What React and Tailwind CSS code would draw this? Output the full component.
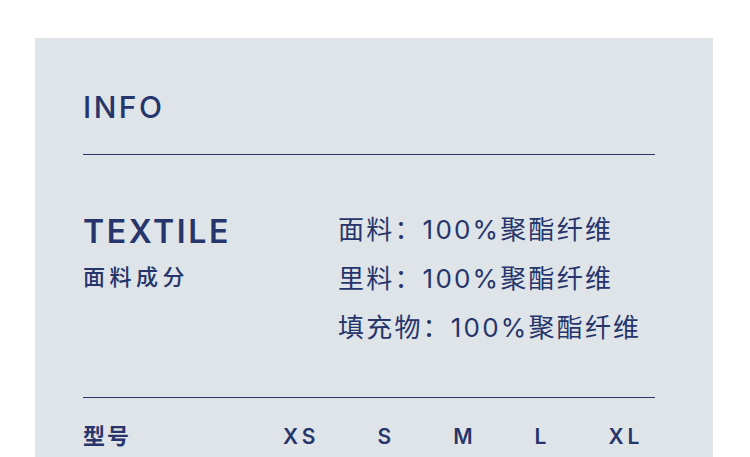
import React from 'react';

const FONT = { fontFamily: 'Inter, "Noto Sans CJK SC", sans-serif' };

const fabric = [
  { label: '面料', value: '100%聚酯纤维' },
  { label: '里料', value: '100%聚酯纤维' },
  { label: '填充物', value: '100%聚酯纤维' },
];

const sizes = ['XS', 'S', 'M', 'L', 'XL'];

const App = () => {
  return (
    <div className="bg-white min-h-screen pt-[38px] pl-[35px]" style={FONT}>
      <div className="w-[678px] h-[460px] bg-[#dfe4e9] pl-[48px] pr-[58px] pt-[54px] text-[#26356b]">
        {/* --- TITLE --- */}
        <h1 className="text-[30px] leading-none font-medium tracking-[2.5px]">INFO</h1>
        <div className="mt-[32px] h-px bg-[#2a3670]" />

        {/* --- TEXTILE --- */}
        <div className="flex mt-[61px]">
          <div className="w-[255px]">
            <div className="text-[32px] leading-none font-semibold tracking-[2.6px]">TEXTILE</div>
            <div className="mt-[18px] text-[22px] leading-none font-medium tracking-[4.5px]">面料成分</div>
          </div>
          <div className="-mt-[11px]">
            {fabric.map((row) => (
              <div key={row.label} className="text-[26px] leading-[49px] tracking-[2.2px]">
                {row.label}：{row.value}
              </div>
            ))}
          </div>
        </div>

        <div className="mt-[45px] h-px bg-[#2a3670]" />

        {/* --- SIZES --- */}
        <div className="flex items-center mt-[27px]">
          <div className="w-[200px] text-[22px] leading-none font-semibold tracking-[2px]">型号</div>
          <div className="flex gap-[58px] text-[21px] leading-none font-semibold tracking-[4px]">
            {sizes.map((s) => (
              <span key={s}>{s}</span>
            ))}
          </div>
        </div>
      </div>
    </div>
  );
};

export default App;
